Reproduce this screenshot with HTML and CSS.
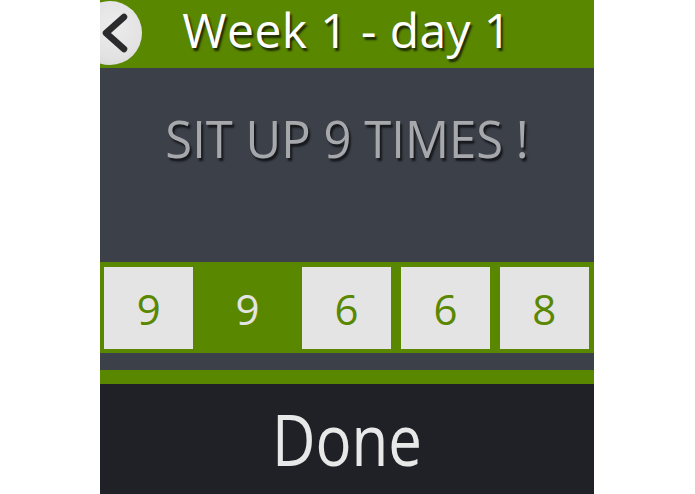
FILE: index.html
```html
<!DOCTYPE html>
<html>
<head>
<meta charset="utf-8">
<link rel="stylesheet" href="styles.css">
</head>
<body>
<div class="stage">
  <div class="watch">
    <header class="header">
      <div class="back">
        <svg class="chev" viewBox="0 0 64 64" width="64" height="64"><path d="M46 16 L28 32 L46 48" fill="none" stroke="#2b2b2d" stroke-width="6.5" stroke-linecap="round" stroke-linejoin="round"/></svg>
      </div>
      <h1 class="title">Week 1 - day 1</h1>
    </header>
    <section class="main">
      <div class="instruction">SIT UP 9 TIMES !</div>
    </section>
    <div class="sets">
      <div class="set">9</div>
      <div class="set current">9</div>
      <div class="set">6</div>
      <div class="set">6</div>
      <div class="set">8</div>
    </div>
    <div class="spacer"></div>
    <div class="bar"></div>
    <div class="done"><span class="done-label">Done</span></div>
  </div>
</div>
</body>
</html>
```
FILE: styles.css
```css
html, body {
  margin: 0;
  padding: 0;
  background: #ffffff;
}
.stage {
  display: flex;
  width: 695px;
  height: 494px;
  padding-left: 100px;
  box-sizing: border-box;
}
.watch {
  width: 494px;
  height: 494px;
  display: flex;
  flex-direction: column;
  font-family: "Open Sans", "Noto Sans", sans-serif;
  background: #3c4049;
}
.header {
  position: relative;
  height: 68px;
  background: #5a8700;
  overflow: hidden;
  display: flex;
  align-items: flex-start;
  justify-content: center;
}
.back {
  position: absolute;
  left: -22px;
  top: 1px;
  width: 64px;
  height: 64px;
  border-radius: 50%;
  background: radial-gradient(circle at 55% 40%, #ececec 0%, #e2e2e2 60%, #cfcfcf 100%);
}
.chev {
  position: absolute;
  left: 0;
  top: 0;
}
.title {
  margin: 0;
  font-weight: 400;
  font-size: 48px;
  line-height: 60px;
  color: #ffffff;
  text-shadow: 2px 3px 2px #1e2a05;
  letter-spacing: 0.4px;
}
.main {
  height: 194px;
  display: flex;
  justify-content: center;
}
.instruction {
  margin-top: 36px;
  font-size: 49px;
  line-height: 72px;
  color: #a7a8ac;
  text-shadow: 2px 3px 2px #15171b;
  transform: scaleY(1.06);
}
.sets {
  height: 82px;
  background: #5a8700;
  border-top: 5px solid #5a8700;
  border-bottom: 4px solid #5a8700;
  padding: 0 5px 0 4px;
  display: flex;
  gap: 9.5px;
}
.set {
  flex: 1;
  background: #e4e4e4;
  color: #5a8700;
  font-size: 42px;
  display: flex;
  align-items: center;
  justify-content: center;
}
.set.current {
  background: #5a8700;
  color: #e4e4e4;
}
.spacer {
  height: 17px;
  background: #3c4049;
}
.bar {
  height: 14px;
  background: #5a8700;
}
.done {
  flex: 1;
  background: #202126;
  color: #e8e8e8;
  display: flex;
  align-items: center;
  justify-content: center;
}
.done-label {
  font-size: 60px;
  line-height: 80px;
  transform: scaleY(1.18);
}
```
